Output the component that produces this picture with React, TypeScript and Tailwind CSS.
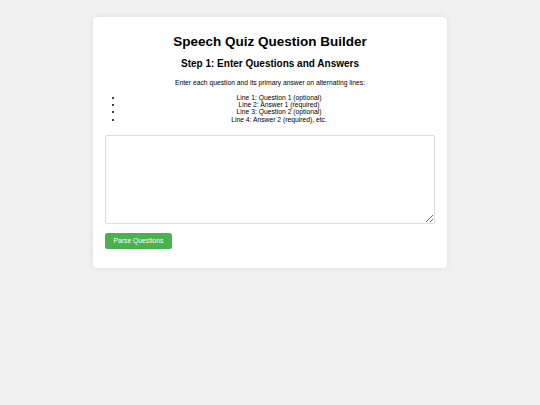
export default function App(): JSX.Element {
  return (
    <div className="min-h-[405px] bg-[#f0f0f0] pt-[17px] font-['Liberation_Sans',Arial,sans-serif] text-black">
      <div className="mx-auto w-[354px] rounded-[4px] bg-white px-[12px] pt-[17px] pb-[19px] shadow-[0_0_6px_rgba(0,0,0,0.08)]">
        <h1 className="text-center text-[13.5px] font-bold leading-[16px]">
          Speech Quiz Question Builder
        </h1>

        <h2 className="mt-[8.4px] text-center text-[10px] font-bold leading-[12px]">
          Step 1: Enter Questions and Answers
        </h2>

        <p className="mt-[8.8px] text-center text-[6.75px] leading-[7.35px]">
          Enter each question and its primary answer on alternating lines:
        </p>

        <ul className="mt-[7px] list-disc pl-[18px] text-center text-[6.75px] leading-[7.35px]">
          <li>Line 1: Question 1 (optional)</li>
          <li>Line 2: Answer 1 (required)</li>
          <li>Line 3: Question 2 (optional)</li>
          <li>Line 4: Answer 2 (required), etc.</li>
        </ul>

        <textarea
          className="mt-[12.5px] block h-[89px] w-full rounded-[2px] border border-[#dddddd] bg-white p-[3px] text-[6.75px] outline-none"
          aria-label="Questions and answers"
        />

        <button
          className="mt-[8.7px] block h-[16px] w-[67px] rounded-[2.5px] bg-[#4caf50] text-center text-[6.75px] leading-[16px] text-white"
          type="button"
        >
          Parse Questions
        </button>
      </div>
    </div>
  );
}
